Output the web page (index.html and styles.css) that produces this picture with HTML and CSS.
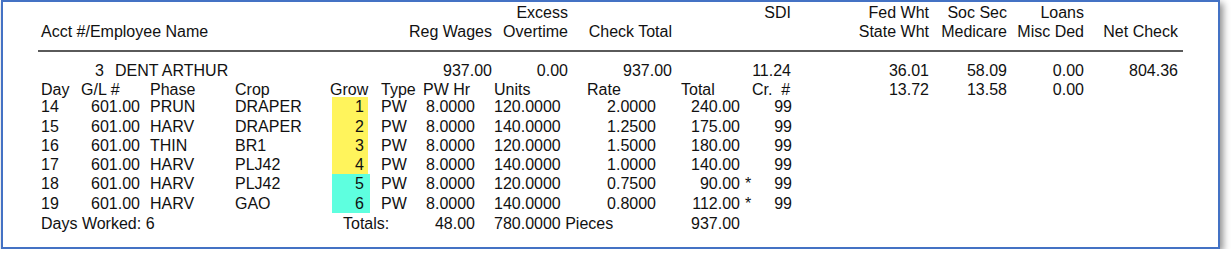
FILE: index.html
```html
<!DOCTYPE html>
<html lang="en">
<head>
<meta charset="utf-8">
<title>Payroll Check Detail</title>
<link rel="stylesheet" href="styles.css">
</head>
<body>
<div class="frame">
  <div class="summary">
    <span></span><span></span><span class="r">Excess</span><span></span><span class="r">SDI</span><span class="r">Fed Wht</span><span class="r">Soc Sec</span><span class="r">Loans</span><span></span><span></span>
    <span class="name-h">Acct #/Employee Name</span><span class="r">Reg Wages</span><span class="r">Overtime</span><span class="r">Check Total</span><span></span><span class="r">State Wht</span><span class="r">Medicare</span><span class="r">Misc Ded</span><span class="r">Net Check</span><span></span>
    <div class="rule"></div>
    <span class="emp"><span class="acct">3</span><span class="ename">DENT ARTHUR</span></span><span class="r">937.00</span><span class="r">0.00</span><span class="r">937.00</span><span class="r">11.24</span><span class="r">36.01</span><span class="r">58.09</span><span class="r">0.00</span><span class="r">804.36</span><span></span>
  </div>

  <div class="detail">
    <div class="drow head">
      <span>Day</span><span>G/L #</span><span>Phase</span><span>Crop</span><span>Grow</span><span>Type</span><span>PW Hr</span><span>Units</span><span>Rate</span><span>Total</span><span></span><span class="pre">Cr.  #</span><span class="r">13.72</span><span class="r">13.58</span><span class="r">0.00</span>
    </div>
    <div class="drow">
      <span>14</span><span class="r gl">601.00</span><span>PRUN</span><span>DRAPER</span><span class="grow yellow">1</span><span>PW</span><span class="r hr">8.0000</span><span>120.0000</span><span class="r rate">2.0000</span><span class="r">240.00</span><span></span><span class="r">99</span>
    </div>
    <div class="drow">
      <span>15</span><span class="r gl">601.00</span><span>HARV</span><span>DRAPER</span><span class="grow yellow">2</span><span>PW</span><span class="r hr">8.0000</span><span>140.0000</span><span class="r rate">1.2500</span><span class="r">175.00</span><span></span><span class="r">99</span>
    </div>
    <div class="drow">
      <span>16</span><span class="r gl">601.00</span><span>THIN</span><span>BR1</span><span class="grow yellow">3</span><span>PW</span><span class="r hr">8.0000</span><span>120.0000</span><span class="r rate">1.5000</span><span class="r">180.00</span><span></span><span class="r">99</span>
    </div>
    <div class="drow">
      <span>17</span><span class="r gl">601.00</span><span>HARV</span><span>PLJ42</span><span class="grow yellow">4</span><span>PW</span><span class="r hr">8.0000</span><span>140.0000</span><span class="r rate">1.0000</span><span class="r">140.00</span><span></span><span class="r">99</span>
    </div>
    <div class="drow">
      <span>18</span><span class="r gl">601.00</span><span>HARV</span><span>PLJ42</span><span class="grow cyan">5</span><span>PW</span><span class="r hr">8.0000</span><span>120.0000</span><span class="r rate">0.7500</span><span class="r">90.00</span><span class="star">*</span><span class="r">99</span>
    </div>
    <div class="drow">
      <span>19</span><span class="r gl">601.00</span><span>HARV</span><span>GAO</span><span class="grow cyan">6</span><span>PW</span><span class="r hr">8.0000</span><span>140.0000</span><span class="r rate">0.8000</span><span class="r">112.00</span><span class="star">*</span><span class="r">99</span>
    </div>
    <div class="drow totals">
      <span class="days">Days Worked: 6</span><span class="tot-label">Totals:</span><span class="r hr">48.00</span><span class="units">780.0000 Pieces</span><span class="r">937.00</span>
    </div>
  </div>
</div>
</body>
</html>
```

FILE: styles.css
```css
* {
  box-sizing: border-box;
}

body {
  margin: 0;
  background: #ffffff;
  font-family: "Liberation Sans", Arial, sans-serif;
  font-size: 16px;
  color: #111111;
}

.frame {
  margin-left: 1px;
  width: 1219px;
  height: 249px;
  border: 2px solid #4472c4;
  box-shadow: 3px 3px 7px rgba(0, 0, 0, 0.45);
  padding: 1px 0 0 35px;
  background: #ffffff;
}

.summary {
  display: grid;
  grid-template-columns: 362px 92px 76px 104px 119px 138px 78px 77px 94px 5px;
  line-height: 19px;
  white-space: nowrap;
}

.r {
  text-align: right;
  white-space: nowrap;
}

.name-h {
  padding-left: 3px;
}

.rule {
  grid-column: 1 / -1;
  height: 2px;
  margin: 9px 0;
  background: #5a5a5a;
}

.emp {
  display: flex;
  padding-left: 3px;
}

.acct {
  width: 63px;
  text-align: right;
}

.ename {
  margin-left: 11px;
}

.detail {
  padding-left: 3px;
}

.drow {
  display: grid;
  grid-template-columns: 40px 69px 85px 95px 51px 42px 71px 93px 94px 59px 12px 40px 137px 78px 77px;
  line-height: 19.3px;
  white-space: nowrap;
}

.drow.head {
  line-height: 19px;
  margin-bottom: -1.8px;
}

.pre {
  white-space: pre;
}

.gl {
  padding-right: 10px;
}

.hr {
  padding-right: 19px;
}

.rate {
  padding-right: 25px;
}

.grow {
  margin-left: 2px;
  text-align: right;
}

.yellow {
  width: 36px;
  padding-right: 4px;
  background: #fff45c;
}

.cyan {
  width: 38px;
  padding-right: 6px;
  background: #5effdf;
}

.star {
  padding-left: 5px;
}

.totals {
  margin-top: 1px;
}

.days {
  grid-column: 1 / 5;
}

.tot-label {
  grid-column: 5 / 7;
  padding-left: 13px;
}

.units {
  grid-column: 8 / 10;
}
```
